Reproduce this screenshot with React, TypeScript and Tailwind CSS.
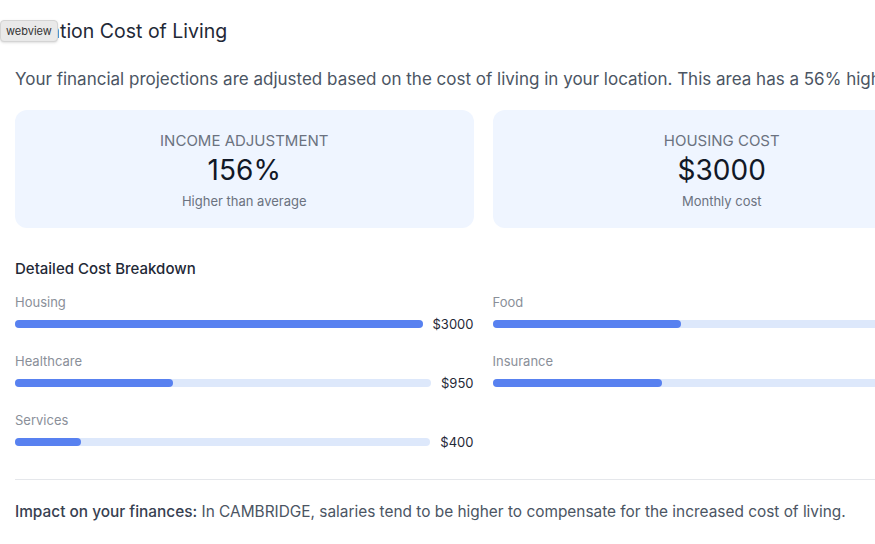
import React from "react";

interface CostItem {
  label: string;
  amount: number;
}

const items: CostItem[] = [
  { label: "Housing", amount: 3000 },
  { label: "Food", amount: 1140 },
  { label: "Healthcare", amount: 950 },
  { label: "Insurance", amount: 1030 },
  { label: "Services", amount: 400 },
];

const MAX = 2500;

const StatCard = ({
  title,
  value,
  note,
}: {
  title: string;
  value: string;
  note: string;
}) => (
  <div className="flex flex-col items-center rounded-[12px] bg-[#eff5ff] pt-[21px] pb-[18px]">
    <div className="text-[15px] leading-[20px] text-[#6b7280] uppercase">
      {title}
    </div>
    <div className="mt-[2px] text-[28px] leading-[34px] text-[#111827]">
      {value}
    </div>
    <div className="mt-[5px] text-[13px] leading-[18px] text-[#6b7280]">
      {note}
    </div>
  </div>
);

const CostRow = ({ item }: { item: CostItem }) => {
  const pct = Math.min(100, (item.amount / MAX) * 100);
  return (
    <div>
      <div className="text-[13px] leading-[18px] text-[#8a8f99]">
        {item.label}
      </div>
      <div className="mt-[4px] flex items-center gap-[10px]">
        <div className="h-[8px] flex-1 rounded-full bg-[#dde8fb]">
          <div
            className="h-full rounded-full bg-[#5881f0]"
            style={{ width: `${pct}%` }}
          />
        </div>
        <span className="text-[13px] leading-[18px] text-[#1f2937]">
          ${item.amount}
        </span>
      </div>
    </div>
  );
};

export default function App() {
  return (
    <div
      className="relative w-full overflow-hidden bg-white"
      style={{ fontFamily: "Inter, 'Noto Sans', sans-serif" }}
    >
      <div className="w-[966px] px-[15px] pt-[17px] pb-[30px]">
        <h2 className="text-[19.5px] leading-[28px] font-normal text-[#1f2937]">
          Location Cost of Living
        </h2>
        <p className="mt-[22px] text-[17px] leading-[24px] whitespace-nowrap text-[#4b5563]">
          Your financial projections are adjusted based on the cost of living in
          your location. This area has a 56% higher cost of living than the
          national average.
        </p>

        <div className="mt-[19px] grid grid-cols-2 gap-x-[19px]">
          <StatCard
            title="Income Adjustment"
            value="156%"
            note="Higher than average"
          />
          <StatCard title="Housing Cost" value="$3000" note="Monthly cost" />
        </div>

        <h3 className="mt-[31px] text-[15px] leading-[20px] font-medium text-[#1f2937]">
          Detailed Cost Breakdown
        </h3>
        <div className="mt-[14px] grid grid-cols-2 gap-x-[19px] gap-y-[19px]">
          {items.map((item) => (
            <CostRow key={item.label} item={item} />
          ))}
        </div>

        <div className="mt-[28px] border-t border-[#e5e7eb] pt-[21px]">
          <p className="text-[15.4px] leading-[22px] text-[#4b5563]">
            <span className="font-medium text-[#374151]">
              Impact on your finances:
            </span>{" "}
            In CAMBRIDGE, salaries tend to be higher to compensate for the
            increased cost of living.
          </p>
        </div>
      </div>

      <div className="absolute top-[20px] left-0 rounded-[4px] border border-[#d4d4d4] bg-[#e9e9e9] px-[5px] py-[3px] text-[11px] leading-[14px] text-[#333] shadow-sm">
        webview
      </div>
    </div>
  );
}
